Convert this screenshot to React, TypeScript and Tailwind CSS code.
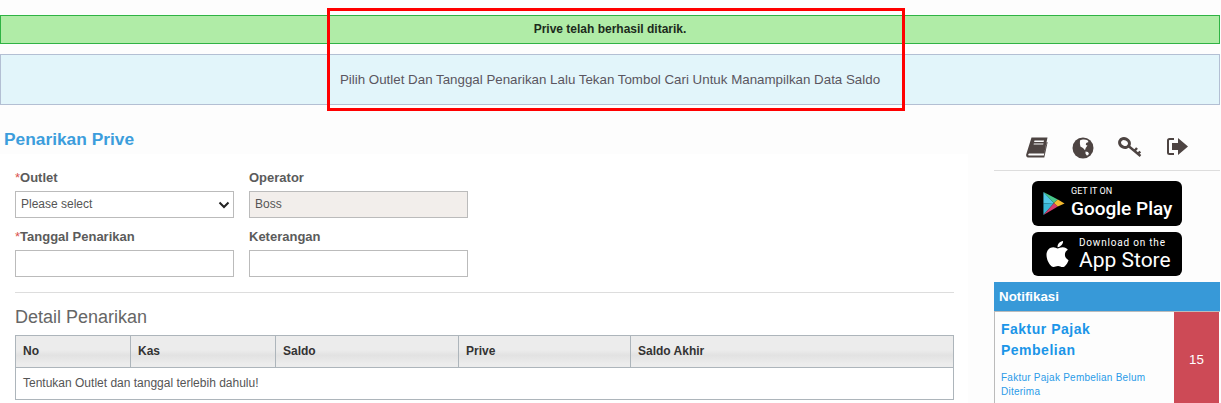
import { FaApple } from "react-icons/fa";

const columns = [
  { label: "No", width: "w-[115px]" },
  { label: "Kas", width: "w-[145px]" },
  { label: "Saldo", width: "w-[183px]" },
  { label: "Prive", width: "w-[172px]" },
  { label: "Saldo Akhir", width: "flex-1" },
];

function BookIcon() {
  return (
    <svg width="22" height="21" viewBox="0 0 22 21" fill="#4d4442">
      <path d="M5.500 0.500h16L18.200 16.500H3.800c-.9 0-1.500.5-1.600 1.100-.1.600.4 1 1.100 1h14.500l3-13.600.8.300-3.300 15.200H3C1 20.500-.2 19.300.2 17.500z" />
      <path d="M8.500 3.500h9.500l-.4 1.600H8.100zM7.800 6.500h9.700l-.3 1H7.600z" fill="#fdfdfd" />
    </svg>
  );
}

function GlobeIcon() {
  return (
    <svg width="22" height="22" viewBox="0 0 22 22">
      <circle cx="11" cy="11" r="10.500" fill="#4d4442" />
      <path d="M8 3.500c2-1.500 5.500-1.300 7.500-.3l1 1.800-2.300 1-.4 2 1.700.6-1.800 2.300-.7 2.300-2-2.300-2.600-1.500-.5-3z" fill="#fdfdfd" />
      <path d="M13.500 14.500l2.500.5 1 2-2 1.800-1.500-2z" fill="#fdfdfd" />
    </svg>
  );
}

function KeyIcon() {
  return (
    <svg width="24" height="21" viewBox="0 0 24 21" fill="none" stroke="#4d4442">
      <ellipse cx="6.500" cy="6" rx="5" ry="4.300" transform="rotate(25 6.500 6)" strokeWidth="3" />
      <path d="M10.500 9l12 10M16.500 14l2.500-3M20 17l2.200-2.500" strokeWidth="2.400" />
    </svg>
  );
}

function ExitIcon() {
  return (
    <svg width="22" height="19" viewBox="0 0 22 19" fill="#4d4442">
      <path d="M8 2H3.500C2.500 2 2 2.500 2 3.500v12c0 1 .5 1.500 1.500 1.500H8" fill="none" stroke="#4d4442" strokeWidth="2" />
      <path d="M6 6h6V1l10 8.500L12 18v-5H6z" />
    </svg>
  );
}

function PlayIcon() {
  return (
    <svg width="22" height="23" viewBox="0 0 22 24">
      <path d="M0 0v12l11-0.500z" fill="#4fc8e8" />
      <path d="M0 0l11 11.500 4-3.700z" fill="#48c78a" />
      <path d="M0 24V12l11-0.500z" fill="#38b7d6" />
      <path d="M0 24l11-12.500 4 3.700z" fill="#d63b6c" />
      <path d="M15 7.800L22 12l-7 3.200L11 11.500z" fill="#f5b92e" />
    </svg>
  );
}

export default function App() {
  return (
    <div className="relative h-[403px] w-[1221px] overflow-hidden bg-[#fdfdfd] font-['Liberation_Sans',Arial,sans-serif] text-[#555]">
      <div className="pt-[15px] pr-px">
        <div className="flex h-[29px] items-center justify-center border border-[#2fb344] bg-[#b0eca7] pb-px text-xs font-bold text-[#1c2b1c]">
          Prive telah berhasil ditarik.
        </div>
        <div className="mt-[10px] flex h-[51px] items-center justify-center border border-[#b3bfd3] bg-[#e2f5fa] text-[13.33px] text-[#5a5560]">
          Pilih Outlet Dan Tanggal Penarikan Lalu Tekan Tombol Cari Untuk Manampilkan Data Saldo
        </div>
      </div>

      <div className="flex">
        <div className="w-[994px]">
          <h1 className="mt-6 pl-1 text-[17.33px] leading-5 font-bold text-[#3c9ddc]">Penarikan Prive</h1>

          <div className="mt-[5px] h-[260px] w-[968px] bg-white pt-[15px] pl-[15px]">
            <div className="grid w-[453px] grid-cols-[219px_219px] gap-x-[15px]">
              <label className="h-[22px] text-[13px] leading-[17px] font-bold text-[#5b5b5b]">
                <span className="font-normal text-[#d9534f]">*</span>Outlet
              </label>
              <label className="h-[22px] text-[13px] leading-[17px] font-bold text-[#5b5b5b]">Operator</label>
              <div className="relative h-[27px]">
                <select className="block h-[27px] w-full appearance-none border border-[#bbb] bg-white pb-[2px] pl-[5px] text-xs text-[#555]">
                  <option>Please select</option>
                </select>
                <svg className="absolute top-[10px] right-[4px]" width="12" height="8" viewBox="0 0 12 8" fill="none" stroke="#222" strokeWidth="2">
                  <path d="M1.500 1.500L6 6l4.500-4.500" />
                </svg>
              </div>
              <input readOnly value="Boss" className="h-[27px] border border-[#bbb] bg-[#f2eeeb] pb-[2px] pl-[5px] text-xs text-[#555]" />
              <label className="mt-[10px] h-[22px] text-[13px] leading-[17px] font-bold text-[#5b5b5b]">
                <span className="font-normal text-[#d9534f]">*</span>Tanggal Penarikan
              </label>
              <label className="mt-[10px] h-[22px] text-[13px] leading-[17px] font-bold text-[#5b5b5b]">Keterangan</label>
              <input className="h-[27px] border border-[#bbb] bg-white" />
              <input className="h-[27px] border border-[#bbb] bg-white" />
            </div>

            <div className="mt-[15px] h-px w-[939px] bg-[#ddd]" />
            <h2 className="mt-[14px] text-lg leading-5 text-[#666]">Detail Penarikan</h2>

            <div className="mt-2 w-[939px] border border-[#adb5bb] text-xs">
              <div className="flex h-[32px] border-b border-[#adb5bb] bg-[linear-gradient(#ececec_0%,#ececec_45%,#e2e2e2_62%,#ececec_90%)]">
                {columns.map((column, index) => (
                  <div
                    key={column.label}
                    className={`${column.width} flex items-center border-[#adb5bb] pb-[2px] pl-[7px] font-bold text-[#333] ${index < 4 ? "border-r" : ""}`}>
                    {column.label}
                  </div>
                ))}
              </div>
              <div className="flex h-[31px] items-center pb-[2px] pl-[7px] text-[#555]">Tentukan Outlet dan tanggal terlebih dahulu!</div>
            </div>
          </div>
        </div>

        <aside className="w-[226px]">
          <div className="mt-[31px] flex h-[35px] items-start gap-[24px] border-b border-[#ddd] pt-px pl-[32px]">
            <BookIcon />
            <GlobeIcon />
            <KeyIcon />
            <ExitIcon />
          </div>

          <div className="mt-[10px] flex flex-col items-center gap-[6px]">
            <div className="flex h-[45px] w-[150px] items-center gap-[6px] rounded-md bg-black pl-[11px] text-white">
              <PlayIcon />
              <div className="pb-[2px] font-['Roboto',sans-serif]">
                <div className="text-[9px] leading-[11px]">GET IT ON</div>
                <div className="text-[19px] leading-[23px] font-medium">Google Play</div>
              </div>
            </div>
            <div className="flex h-[44px] w-[150px] items-center gap-[9px] rounded-md bg-black pl-[13px] text-white">
              <FaApple className="h-[30px] w-[25px]" />
              <div className="pt-[2px] font-['Roboto',sans-serif]">
                <div className="text-[10px] leading-[10px] tracking-[0.8px]">Download on the</div>
                <div className="text-[21px] leading-[24px]">App Store</div>
              </div>
            </div>
          </div>

          <div className="mt-[6px] flex h-[29px] items-center bg-[#3799d8] pl-[5px] text-[13.33px] font-bold text-white">Notifikasi</div>
          <div className="flex h-[100px] border-t border-l border-[#bbb]">
            <div className="w-[179px] pt-[7px] pl-[6px]">
              <div className="text-sm leading-[21px] font-bold tracking-[0.5px] text-[#1b95e8]">
                Faktur Pajak
                <br />
                Pembelian
              </div>
              <div className="mt-[10px] w-[150px] text-[10px] leading-[14px] tracking-[0.25px] text-[#2a9be8]">
                Faktur Pajak Pembelian Belum Diterima
              </div>
            </div>
            <div className="flex h-full w-[45px] items-start justify-center bg-[#cd4a56] pt-[38px] text-[13.33px] text-white">15</div>
          </div>
        </aside>
      </div>

      {/* annotation drawn over the alerts */}
      <div className="absolute top-[8px] left-[327px] h-[103px] w-[578px] border-[3px] border-[#f00]" />
    </div>
  );
}
